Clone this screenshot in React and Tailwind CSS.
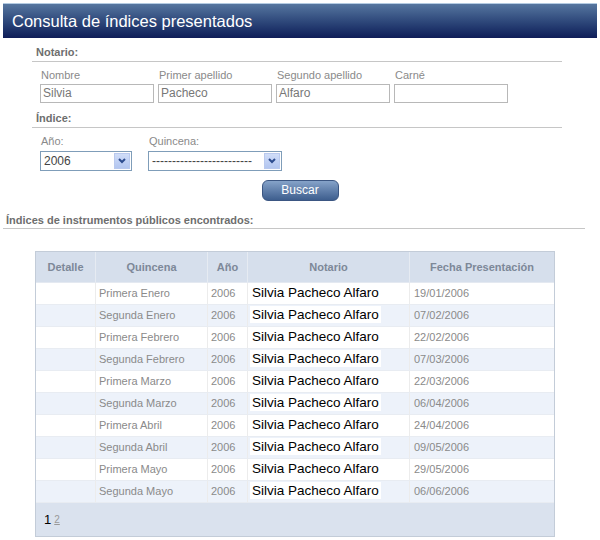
import React from "react";

const rows = [
  { q: "Primera Enero", f: "19/01/2006" },
  { q: "Segunda Enero", f: "07/02/2006" },
  { q: "Primera Febrero", f: "22/02/2006" },
  { q: "Segunda Febrero", f: "07/03/2006" },
  { q: "Primera Marzo", f: "22/03/2006" },
  { q: "Segunda Marzo", f: "06/04/2006" },
  { q: "Primera Abril", f: "24/04/2006" },
  { q: "Segunda Abril", f: "09/05/2006" },
  { q: "Primera Mayo", f: "29/05/2006" },
  { q: "Segunda Mayo", f: "06/06/2006" },
];

const Field = ({ label, value }) => (
  <div className="flex flex-col w-[114px]">
    <span className="text-[11px] leading-[14px] text-[#8a8a8a] pl-[1px]">{label}</span>
    <div className="mt-[2px] h-[19px] border border-[#b8b8b8] text-[12px] leading-[17px] text-[#777] pl-[2px]">
      {value}
    </div>
  </div>
);

const Select = ({ label, value, width }) => (
  <div className="flex flex-col">
    <span className="text-[11px] leading-[14px] text-[#8a8a8a] pl-[1px]">{label}</span>
    <div className={`mt-[3px] h-[20px] border border-[#7f9db9] flex items-center justify-between ${width}`}>
      <span className="text-[12px] text-[#444] pl-[3px] leading-[18px]">{value}</span>
      <span className="mr-[1px] w-[16px] h-[16px] bg-gradient-to-b from-[#d0ddf8] to-[#b3c6f0] border border-[#b9c9ee] flex items-center justify-center">
        <svg width="8" height="6" viewBox="0 0 8 6">
          <path d="M1 1 L4 4 L7 1" stroke="#2d4c8f" strokeWidth="2" fill="none" />
        </svg>
      </span>
    </div>
  </div>
);

export default function App() {
  return (
    <div className="w-[600px] h-[540px] bg-white font-['Liberation_Sans',Arial,sans-serif] overflow-hidden">
      {/* Title bar */}
      <div className="mx-[3px] mt-[3px] h-[35px] border-t border-[#b4cbe2] bg-gradient-to-b from-[#56769f] to-[#0f1d58] flex items-center pl-[9px] text-white text-[16.5px]">
        Consulta de índices presentados
      </div>

      {/* Filters */}
      <div className="ml-[32px] w-[530px] mt-[7px]">
        <div className="border-b border-[#c6c6c6] pl-[4px] pb-[2px] text-[11px] leading-[14px] font-bold text-[#6e6e6e]">
          Notario:
        </div>
        <div className="flex gap-[4px] pl-[8px] mt-[6px]">
          <Field label="Nombre" value="Silvia" />
          <Field label="Primer apellido" value="Pacheco" />
          <Field label="Segundo apellido" value="Alfaro" />
          <Field label="Carné" value="" />
        </div>

        <div className="mt-[8px] border-b border-[#c6c6c6] pl-[4px] pb-[2px] text-[11px] leading-[14px] font-bold text-[#6e6e6e]">
          Índice:
        </div>
        <div className="flex gap-[16px] pl-[8px] mt-[6px]">
          <Select label="Año:" value="2006" width="w-[92px]" />
          <Select label="Quincena:" value="-------------------------" width="w-[134px]" />
        </div>
      </div>

      <div className="flex justify-center mt-[9px]">
        <button className="w-[77px] h-[21px] rounded-[6px] border border-[#3b5682] bg-gradient-to-b from-[#86a3c9] to-[#3e5e8e] text-white text-[12px] leading-[19px]">
          Buscar
        </button>
      </div>

      <div className="ml-[3px] w-[582px] mt-[12px] border-b border-[#c6c6c6] pl-[3px] pb-[1px] text-[11px] leading-[14px] font-bold text-[#6e6e6e]">
        Índices de instrumentos públicos encontrados:
      </div>

      {/* Results table */}
      <div className="ml-[35px] mt-[22px] w-[520px] border border-[#c3ccd8]">
        <div className="flex h-[31px] bg-[#d6dfec] text-[11px] font-bold text-[#7d8898] border-b border-[#e4e9f1]">
          <div className="w-[60px] flex items-center justify-center border-r border-[#e6ebf2]">Detalle</div>
          <div className="w-[112px] flex items-center justify-center border-r border-[#e6ebf2]">Quincena</div>
          <div className="w-[40px] flex items-center justify-center border-r border-[#e6ebf2]">Año</div>
          <div className="w-[162px] flex items-center justify-center border-r border-[#e6ebf2]">Notario</div>
          <div className="flex-1 flex items-center justify-center">Fecha Presentación</div>
        </div>
        {rows.map((r, i) => (
          <div
            key={i}
            className={`flex h-[22px] text-[11px] text-[#8a8a8a] border-b border-[#e8ecf2] ${i % 2 ? "bg-[#edf2fa]" : "bg-white"}`}
          >
            <div className="w-[60px] border-r border-[#ececec]"></div>
            <div className="w-[112px] border-r border-[#ececec] flex items-center pl-[3px]">{r.q}</div>
            <div className="w-[40px] border-r border-[#ececec] flex items-center pl-[3px]">2006</div>
            <div className="w-[162px] border-r border-[#ececec] flex items-start pl-[2px] pt-[1px]">
              <span className="bg-white px-[2px] text-[13.5px] leading-[17px] text-black">Silvia Pacheco Alfaro</span>
            </div>
            <div className="flex-1 flex items-center pl-[4px]">{r.f}</div>
          </div>
        ))}
        <div className="h-[33px] bg-[#dae2ee] flex items-center pl-[8px] gap-[3px]">
          <span className="text-[13px] text-black">1</span>
          <span className="text-[10px] text-[#999] underline">2</span>
        </div>
      </div>
    </div>
  );
}
